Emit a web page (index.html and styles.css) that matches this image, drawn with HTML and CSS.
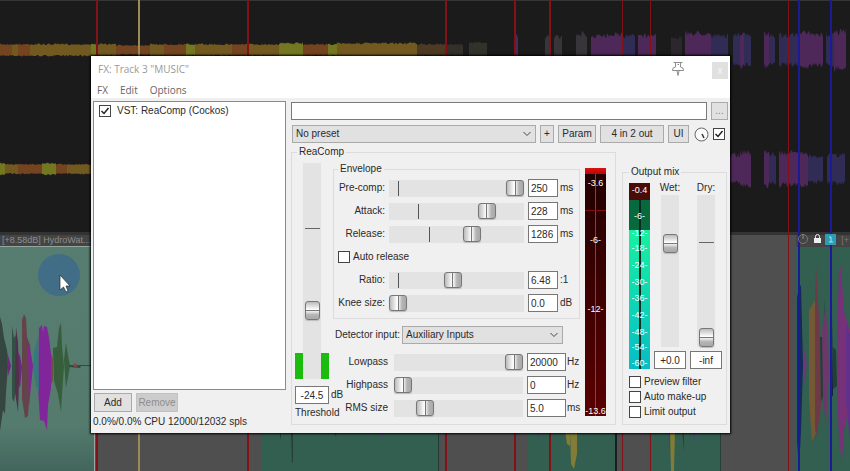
FILE: index.html
```html
<!DOCTYPE html>
<html lang="en">
<head>
<meta charset="utf-8">
<title>FX: Track 3 "MUSIC"</title>
<link rel="stylesheet" href="styles.css">
</head>
<body>
<div class="desktop">
  <svg class="arrange" viewBox="0 0 850 471" preserveAspectRatio="none" aria-hidden="true">
    <defs>
      <linearGradient id="fade" x1="0" y1="0" x2="0" y2="1"><stop offset="0" stop-color="#577c70"/><stop offset=".8" stop-color="#557a6e"/><stop offset="1" stop-color="#42665b"/></linearGradient>
    </defs>
    <rect width="850" height="471" fill="#1b1b1b"/>
    <rect width="850" height="1" fill="#333738"/>
    <rect y="232" width="850" height="239" fill="#4f4f4f"/>
    <rect y="232" width="850" height="3" fill="#333"/>
    <rect y="235" width="94" height="11" fill="#444"/>
    <rect y="246" width="94" height="225" fill="url(#fade)"/>
    <rect y="246" width="94" height="1" fill="#93a69f"/>
    <rect x="94" y="430" width="1" height="41" fill="#9aa8a3"/>
    <rect x="262" y="430" width="177" height="41" fill="#325f50"/>
    <rect x="438" y="430" width="1" height="41" fill="#203a32"/>
    <rect x="528" y="430" width="87" height="41" fill="#325f50"/>
    <rect x="615" y="430" width="2" height="41" fill="#1d1d1d"/>
    <rect x="651" y="430" width="70" height="41" fill="#325f50"/>
    <rect x="796" y="235" width="54" height="12" fill="#444"/>
    <rect x="796" y="247" width="54" height="224" fill="#325f50"/>
    <g id="waves"></g>
    <g class="item-wave">
      <path fill="#34463f" d="M0 317L2 324L4 338L7 350L8 366L6 392L5 414L3 410L0 431Z"/>
      <path fill="#6a2880" d="M7 352L11 366L8 376ZM17 350L20 356L22 367L20 388L17 380Z"/>
      <path fill="#344f43" d="M12 326L14 338L16 335L18 366L16 388L14 402L12 398Z"/>
      <path fill="#513049" d="M16 327L18 342L19 380L18 412L15 392Z"/>
      <path fill="#66434b" d="M22 320L24 314L26 318L27 337L30 345L32 366L30 388L28 416L25 418L22 398Z"/>
      <path fill="#81259b" d="M28 344L31 354L33 366L31 386L29 406ZM39 328L42 325L43 333L44 326L47 327L49 338L51 354L51 388L48 405L47 430L44 421L40 420L38 388Z"/>
      <path fill="#347a7b" d="M34 352L38 336L39 392L36 386L33 367Z"/>
      <path fill="#6a5148" d="M51 354L53 358L53 380L51 385Z"/>
      <path fill="#375e3b" d="M53 348L57 347L59 328L61 323L62 347L64 366L62 394L61 412L58 394L54 381ZM64 360L66 343L68 356L70 366L66 388Z"/>
      <path fill="#344b41" d="M69 365H91V366H81L80 368L69 367Z"/><path fill="#8b4750" d="M74 363L77 364L77 367L73 366Z"/>
    </g>
    <g>
      <path fill="#17285d" d="M797 298L799 287L801 285L803 365L801 431L799 470L797 440Z"/>
      <path fill="#643d72" d="M803 342L807 365L803 390Z"/>
      <path fill="#735a35" d="M809 310L813 304L815 300L817 430L812 442L809 400Z"/>
      <path fill="#6f3948" d="M815 300L816 265L818 300L820 340L821 405L817 435L815 430Z"/>
      <path fill="#243e36" d="M820 337L823 337L825 300L825 390L821 402ZM833 347L836 350L837 386L833 389Z"/>
      <path fill="#6c386b" d="M822 330L825 308L828 330L829 375L826 425L823 400Z"/>
      <path fill="#131d48" d="M830 314L832 315L833 396L831 395Z"/>
      <path fill="#763178" d="M837 340L839 268L841 268L844 312L850 330V405L844 430L842 462L839 440L837 390Z"/>
      <path fill="#61308a" d="M846 322L850 335V440L846 400Z"/>
      <path fill="#263f37" d="M291 430H293V462L292 463ZM279 430H281V441ZM334 430H337L336 437ZM682 430H684V451ZM720 430H721V471H720Z"/>
      <path fill="#543c76" d="M381 430H383V440ZM537 430H539V440ZM693 430H695V443ZM668 430H670V456Z"/>
      <path fill="#827c36" d="M565 430H570V446L567 444ZM570 430H577V454L574 469L571 464ZM670 430H675L674 471H671Z"/>
    </g>
    <g fill="#811216">
      <rect x="96" width="2" height="471"/><rect x="247" width="2" height="471"/><rect x="445" width="2" height="471"/><rect x="514" width="2" height="471"/><rect x="549" width="2" height="471"/><rect x="622" width="1" height="471"/><rect x="650" width="1" height="471"/><rect x="788" width="1" height="471"/>
    </g>
    <rect x="138" width="2" height="471" fill="#9b8b55"/>
    <g fill="#1a1a9b"><rect x="798" width="2" height="471"/><rect x="830" width="2" height="471"/></g>
    <g>
      <circle cx="803" cy="239" r="4.5" fill="none" stroke="#777"/><path d="M803 234V239" stroke="#888"/>
      <rect x="814" y="238" width="7" height="5" fill="#eee"/><path d="M815.500 239V236.500A2 2 0 0 1 819.500 236.500V239" fill="none" stroke="#eee"/>
      <rect x="825" y="234" width="11" height="11" fill="#2d9db6"/><path d="M829 237H831V242M829 242H833" fill="none" stroke="#a6e6ec"/>
    </g>
    <circle cx="59" cy="275" r="21" fill="#416d87"/>
    <path d="M60 275V290L63.500 287L66 292L68 291L66 286H70Z" fill="#fff" stroke="#202f35" stroke-width=".7"/>
  </svg>
  <span class="item-name">[+8.58dB] HydroWat...</span>
  <span class="item-name item-name-right">[+</span>

  <main class="window">
    <header class="titlebar">
      <h1>FX: Track 3 "MUSIC"</h1>
      <button class="pin" aria-label="Pin window"><svg width="14" height="16" viewBox="0 0 14 16" fill="none" stroke="#8e8e8e"><path d="M2.500 1.500H11.500M4.500 2V6M9.500 2V6M6.500 3.500H8M4.500 6Q1 6.500 1.500 9.500H12.500Q13 6.500 9.500 6M6 10L7 14.500L8 10"/></svg></button>
      <button class="close" aria-label="Close">x</button>
    </header>
    <nav class="menu"><button>FX</button><button>Edit</button><button>Options</button></nav>
    <div class="body">
      <section class="chain">
        <div class="list"><label class="check"><input type="checkbox" checked><span>VST: ReaComp (Cockos)</span></label></div>
        <div class="actions"><button class="btn">Add</button><button class="btn" disabled>Remove</button></div>
        <p class="status">0.0%/0.0% CPU 12000/12032 spls</p>
      </section>
      <section class="plugin">
        <div class="bar"><input class="comment" type="text" aria-label="Comment"><button class="btn more" aria-label="More">...</button></div>
        <div class="bar presets">
          <select class="drop grow" aria-label="Preset"><option>No preset</option></select>
          <button class="btn plus">+</button><button class="btn param">Param</button><button class="btn pins">4 in 2 out</button><button class="btn ui">UI</button>
          <svg class="knob" width="15" height="15" viewBox="0 0 15 15" role="img" aria-label="Wet mix"><circle cx="7.500" cy="7.500" r="6.500" fill="#fafafa" stroke="#666"/><path d="M8 7L10 11" stroke="#333" stroke-width="1.500"/></svg>
          <input class="tick" type="checkbox" checked aria-label="Enabled">
        </div>
        <div class="panels">
          <fieldset class="comp">
            <legend>ReaComp</legend>
            <div class="comp-grid">
              <div class="threshold">
                <div class="thr-track"><i class="level"></i><input class="vert" type="range" value="30" id="thr" style="--tick:30%"><i class="level"></i></div>
                <div class="thr-value"><input class="num center" type="text" value="-24.5" aria-label="Threshold value"><span>dB</span></div>
                <label for="thr">Threshold</label>
              </div>
              <div class="controls">
                <fieldset class="envelope">
                  <legend>Envelope</legend>
                  <div class="row"><label for="pre">Pre-comp:</label><input id="pre" class="horz" type="range" value="100" style="--tick:7%"><input class="num" type="text" value="250" aria-label="Pre-comp value"><span>ms</span></div>
                  <div class="row"><label for="att">Attack:</label><input id="att" class="horz" type="range" value="76" style="--tick:22%"><input class="num" type="text" value="228" aria-label="Attack value"><span>ms</span></div>
                  <div class="row"><label for="rel">Release:</label><input id="rel" class="horz" type="range" value="63" style="--tick:30%"><input class="num" type="text" value="1286" aria-label="Release value"><span>ms</span></div>
                  <label class="check auto"><input type="checkbox"><span>Auto release</span></label>
                  <div class="row"><label for="rat">Ratio:</label><input id="rat" class="horz" type="range" value="47" style="--tick:7%"><input class="num" type="text" value="6.48" aria-label="Ratio value"><span>:1</span></div>
                  <div class="row"><label for="knee">Knee size:</label><input id="knee" class="horz" type="range" value="0" style="--tick:7%"><input class="num" type="text" value="0.0" aria-label="Knee value"><span>dB</span></div>
                </fieldset>
                <div class="detector"><label for="det">Detector input:</label><select id="det" class="drop"><option>Auxiliary Inputs</option></select></div>
                <div class="filters">
                  <div class="row"><label for="lp">Lowpass</label><input id="lp" class="horz plain" type="range" value="100"><input class="num" type="text" value="20000" aria-label="Lowpass value"><span>Hz</span></div>
                  <div class="row"><label for="hp">Highpass</label><input id="hp" class="horz plain" type="range" value="0"><input class="num" type="text" value="0" aria-label="Highpass value"><span>Hz</span></div>
                  <div class="row"><label for="rms">RMS size</label><input id="rms" class="horz plain" type="range" value="20"><input class="num" type="text" value="5.0" aria-label="RMS value"><span>ms</span></div>
                </div>
              </div>
              <div class="meter reduction"><b style="top:6%">-3.6</b><b style="top:29%">-6-</b><b style="top:57%">-12-</b><b style="top:98%">-13.6</b></div>
            </div>
          </fieldset>
          <fieldset class="output">
            <legend>Output mix</legend>
            <div class="mix">
              <div class="meter out"><b style="top:4%">-0.4</b><b style="top:18%">-6-</b><b style="top:27%">-12-</b><b style="top:35%">-18-</b><b style="top:44%">-24-</b><b style="top:53%">-30-</b><b style="top:62%">-36-</b><b style="top:71%">-42-</b><b style="top:80%">-48-</b><b style="top:88%">-54-</b><b style="top:97%">-60-</b></div>
              <div class="fader"><label for="wet">Wet:</label><input id="wet" class="vert" type="range" value="71" style="--tick:31%"><input class="num center" type="text" value="+0.0" aria-label="Wet value"></div>
              <div class="fader"><label for="dry">Dry:</label><input id="dry" class="vert" type="range" value="0" style="--tick:31%"><input class="num center" type="text" value="-inf" aria-label="Dry value"></div>
            </div>
            <div class="options">
              <label class="check"><input type="checkbox"><span>Preview filter</span></label>
              <label class="check"><input type="checkbox"><span>Auto make-up</span></label>
              <label class="check"><input type="checkbox"><span>Limit output</span></label>
            </div>
          </fieldset>
        </div>
      </section>
    </div>
  </main>
</div>
<script src="waves.js"></script>
</body>
</html>
```
FILE: styles.css
```css
* { box-sizing: border-box; }
body {
  margin: 0;
  background: #1b1b1b;
  color: #2a2a2a;
  font: 10px/14px "Liberation Sans", sans-serif;
}
button, input, select { font: inherit; color: inherit; margin: 0; }
input, select { min-width: 0; }
h1, p, fieldset { margin: 0; padding: 0; }
.desktop {
  position: relative;
  min-height: 100vh;
  padding: 56px 120px 38px 91px;
}
.arrange { position: absolute; inset: 0; width: 100%; height: 100%; }
.item-name {
  position: absolute;
  left: 2px;
  top: 233px;
  white-space: nowrap;
  color: #8d8d8d;
  font: 9px/14px "Liberation Sans", sans-serif;
}
.item-name-right { left: auto; right: 1px; color: #777; }

.window {
  position: relative;
  background: #f0f0f0;
  box-shadow: 0 0 2px 1px #000;
}
.titlebar { display: flex; align-items: center; height: 26px; background: #fff; padding: 0 2px 0 7px; }
.titlebar h1 { flex: 1; font: 10px/14px "Open Sans", sans-serif; color: #999; }
.titlebar button { border: 0; padding: 0; background: none; line-height: 0; }
.titlebar .pin { margin-right: 27px; }
.titlebar .close { align-self: flex-end; width: 16px; height: 17px; margin-bottom: 3px; background: #e0e0e0; color: #f6f6f6; }
.menu { display: flex; gap: 12px; height: 16px; padding: 0 6px; background: #fff; }
.menu button { border: 0; padding: 0; background: none; color: #666; font: 10px/16px "Open Sans", sans-serif; }

.body { display: flex; gap: 5px; padding: 3px 2px 4px; }
.chain { flex: 0 0 193px; display: flex; flex-direction: column; }
.list { flex: 1; background: #fff; border: 1px solid #8a8a8a; padding: 2px 5px; }
.check { display: flex; align-items: center; gap: 3px; }
.list .check { gap: 6px; }
input[type="checkbox"] {
  appearance: none;
  flex: none;
  width: 12px;
  height: 12px;
  background: #fff;
  border: 1px solid #444;
}
input[type="checkbox"]:checked {
  background: #fff url("data:image/svg+xml,%3Csvg xmlns='http://www.w3.org/2000/svg' viewBox='0 0 10 10'%3E%3Cpath d='M1.500 5L4 7.500L8.500 2' fill='none' stroke='%23222' stroke-width='1.500'/%3E%3C/svg%3E");
}
.btn {
  height: 18px;
  padding: 0;
  background: #e1e1e1;
  border: 1px solid #aaa;
  line-height: 14px;
  white-space: nowrap;
}
.actions { display: flex; gap: 4px; padding: 3px 1px; }
.actions .btn { width: 38px; height: 19px; }
.actions .btn:disabled { width: 42px; background: #ccc; border-color: #c2c2c2; color: #8e8e8e; }

.plugin { flex: 1; min-width: 0; padding: 1px 0 4px; }
.bar { display: flex; gap: 4px; align-items: center; }
.comment { flex: 1; height: 18px; border: 1px solid #7a7a7a; background: #fff; }
.more { width: 17px; color: #888; }
.presets { gap: 4px; padding: 5px 3px 0 1px; }
.drop {
  appearance: none;
  height: 18px;
  padding: 0 3px;
  border: 1px solid #aaa;
  border-radius: 0;
  background: #e1e1e1 url("data:image/svg+xml,%3Csvg xmlns='http://www.w3.org/2000/svg' viewBox='0 0 8 6'%3E%3Cpath d='M.500 1L4 4.500L7.500 1' fill='none' stroke='%23444'/%3E%3C/svg%3E") no-repeat right 4px center / 8px 6px;
}
.grow { flex: 1; }
.plus { width: 14px; }
.param { width: 38px; }
.pins { width: 64px; }
.ui { width: 21px; }
.knob { flex: none; margin-left: 1px; }

.panels { display: flex; gap: 6px; padding: 2px 1px 0 0; }
fieldset { min-width: 0; border: 1px solid #dcdcdc; }
legend { margin-left: 2px; padding: 0 2px; line-height: 14px; }
.comp { flex: 1; padding: 0 9px 4px 3px; }
.comp-grid { display: flex; }
.threshold { flex: none; width: 38px; display: flex; flex-direction: column; padding-top: 4px; white-space: nowrap; }
.thr-track { flex: 1; display: flex; justify-content: center; }
.thr-track, .thr-value .num { width: 34px; }
.level { width: 8px; height: 26px; background: #1bbc0e; align-self: flex-end; }
.thr-value { display: flex; align-items: center; gap: 2px; margin: 7px 0 2px; width: 52px; }
.thr-value .num { flex: none; }
.controls { flex: 1; min-width: 0; padding: 3px 0; }
.envelope { padding: 3px 4px 6px; }
.envelope legend, .output legend { margin-left: 0; }
.row {
  display: grid;
  grid-template-columns: 47px 1fr 30px 17px;
  align-items: center;
  height: 18px;
  margin-bottom: 5px;
  white-space: nowrap;
}
.row:last-child { margin-bottom: 0; }
.row label { text-align: right; }
.row .horz { margin: 0 4px; }
.row span { padding-left: 2px; }
.auto { height: 18px; margin-bottom: 5px; }
.detector { display: flex; align-items: center; gap: 2px; padding: 7px 17px 9px 2px; white-space: nowrap; }
.detector .drop { flex: 1; }
.filters { padding-left: 8px; }
.filters .row { grid-template-columns: 47px 1fr 39px 14px; }
.filters .row .horz { margin: 0 4px 0 6px; }
.filters .row span { padding-left: 1px; }
.num { width: 100%; height: 18px; padding: 0 2px; border: 1px solid #777; background: #fff; font: 10px/16px "Liberation Sans", sans-serif; }
.center { padding: 0; text-align: center; }

.horz, .vert { appearance: none; background: #e3e3e3; border-radius: 0; }
.horz {
  height: 17px;
  background: linear-gradient(#555, #555) no-repeat var(--tick) center / 1px 15px, #e3e3e3;
}
.horz.plain { background: #e3e3e3; }
.vert {
  writing-mode: vertical-lr;
  direction: rtl;
  width: 18px;
  background: linear-gradient(#666, #666) no-repeat center var(--tick) / 15px 1px, #e3e3e3;
}
.horz::-webkit-slider-thumb {
  appearance: none;
  width: 18px;
  height: 16px;
  border: 1px solid #777;
  border-radius: 3px;
  background: linear-gradient(#777, #777) no-repeat center / 1px 100%, linear-gradient(90deg, #bbb, #fff 45%, #eee 55%, #b4b4b4 75%, #aaa);
  box-shadow: 0 1px 1px #bbb;
}
.vert::-webkit-slider-thumb {
  appearance: none;
  width: 15px;
  height: 19px;
  border: 1px solid #777;
  border-radius: 3px;
  background: linear-gradient(#777, #777) no-repeat center / 100% 1px, linear-gradient(#bbb, #fff 45%, #eee 55%, #b4b4b4 75%, #aaa);
  box-shadow: 0 1px 1px #bbb;
}

.meter { position: relative; flex: none; width: 21px; }
.meter b {
  position: absolute;
  left: 0;
  right: 0;
  height: 10px;
  margin-top: -5px;
  text-align: center;
  color: #fff;
  font: 9px/10px "Liberation Sans", sans-serif;
}
.reduction {
  margin: 9px 0 4px 5px;
  background:
    linear-gradient(#e01010, #b00a0a) no-repeat top / 100% 6px,
    linear-gradient(#801010, #801010) no-repeat 0 17% / 100% 1px,
    linear-gradient(#555, #555) no-repeat center / 1px 100%,
    linear-gradient(#220000, #5a0000);
}
.output { flex: 0 0 105px; margin-top: 20px; padding: 0 4px 4px 6px; }
.mix { display: flex; gap: 4px; height: 190px; }
.out {
  margin-top: 4px;
  background:
    linear-gradient(transparent 9%, #052a20 9%) no-repeat center / 2px 100%,
    linear-gradient(#4a0c08 9%, #08693f 9%, #08693f 25%, #18f0a0 25%, #08bcc4);
}
.fader { flex: 1; display: flex; flex-direction: column; align-items: center; padding-top: 2px; }
.fader .vert { flex: 1; min-height: 0; }
.fader .num { margin-top: 4px; }
.options { padding-top: 5px; white-space: nowrap; }
.options .check { height: 15px; }
```
FILE: waves.js
```js
// Each segment: start x, end x, centre y, half height, fill.
const gold = '#72591f', rust = '#744320', lime = '#737820', plum = '#4e2858', indigo = '#302c55', grey = '#37343a';
const segments = [
  [0, 12, 50, 6, rust], [12, 18, 50, 6, gold], [18, 30, 50, 6, rust], [30, 91, 50, 6, gold], [91, 97, 50, 6, lime], [97, 116, 50, 6, gold], [116, 150, 50, 5, rust], [150, 164, 50, 6, gold], [164, 186, 50, 6, rust], [186, 195, 50, 6, lime], [195, 232, 50, 6, gold], [232, 247, 50, 6, rust], [247, 279, 50, 6, gold], [279, 303, 50, 7, lime], [303, 328, 50, 6, rust], [328, 337, 50, 6, lime], [337, 417, 50, 7, gold], [417, 446, 50, 6, '#4c3a24'], [446, 463, 50, 6, '#33302a'], [469, 487, 50, 8, '#30332a'],
  [514, 518, 50, 15, plum], [545, 549, 50, 14, grey], [554, 562, 50, 14, grey],
  [576, 587, 50, 17, grey], [591, 609, 50, 15, plum], [609, 622, 50, 18, plum], [622, 635, 50, 15, indigo], [638, 656, 50, 16, plum], [671, 682, 50, 14, '#2b272c'], [685, 711, 50, 18, plum], [711, 728, 50, 15, indigo], [733, 740, 50, 16, indigo], [740, 744, 50, 18, plum], [744, 751, 50, 16, indigo],
  [764, 769, 50, 18, plum], [769, 775, 50, 16, indigo], [779, 798, 50, 16, indigo], [798, 811, 50, 18, plum], [811, 823, 50, 16, plum], [826, 834, 50, 17, indigo], [834, 846, 50, 20, plum],
  [0, 5, 169, 6, lime], [5, 18, 169, 5, gold], [18, 42, 169, 5, rust], [42, 56, 169, 6, lime], [56, 67, 169, 5, rust], [67, 91, 169, 5, gold],
  [730, 740, 169, 15, plum], [740, 751, 169, 18, plum], [764, 769, 169, 18, plum], [769, 776, 169, 16, indigo], [779, 798, 169, 17, plum], [798, 808, 169, 18, plum], [808, 823, 169, 14, indigo], [827, 845, 169, 15, indigo]
];
let seed = 7;
const noise = () => (seed = (seed * 16807) % 2147483647) / 2147483647;
document.getElementById('waves').innerHTML = segments.map(([a, b, y, h, fill]) => {
  const rough = h > 10 ? 0.35 : 0.3;
  const top = [], bottom = [];
  for (let x = a; x <= b; x += 1) {
    top.push(`${x} ${(y - h * (1.1 - rough * noise())).toFixed(1)}`);
    bottom.unshift(`${x} ${(y + h * (1.1 - rough * noise())).toFixed(1)}`);
  }
  return `<path fill="${fill}" d="M${top.concat(bottom).join('L')}Z"/>`;
}).join('');
```
